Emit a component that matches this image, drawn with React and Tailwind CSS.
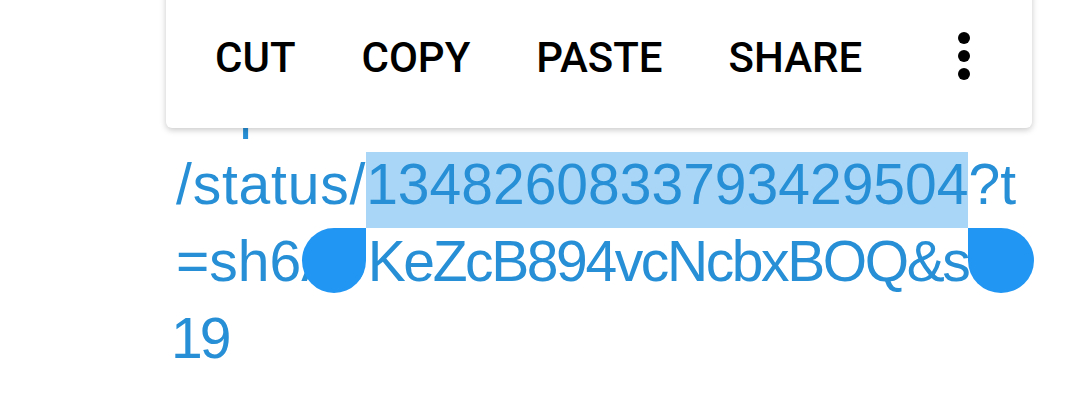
import React from "react";

function Handle({ side }) {
  // teardrop selection handle, pointed corner sits on the selection edge
  if (side === "left") {
    return (
      <span className="absolute top-full right-full w-[64px] h-[65px] bg-[#2196f3] rounded-[50%_0_50%_50%]"></span>
    );
  }
  return (
    <span className="absolute top-full left-full w-[66px] h-[65px] bg-[#2196f3] rounded-[0_50%_50%_50%]"></span>
  );
}

function Toolbar() {
  const items = ["CUT", "COPY", "PASTE", "SHARE"];
  return (
    <div className="absolute left-[166px] top-[-12px] z-10 w-[866px] h-[140px] bg-white rounded-[6px] shadow-[0_2px_6px_rgba(0,0,0,0.22)] flex items-center pl-[49px] pr-[62px] font-['Roboto',sans-serif]">
      <div className="flex items-center gap-[66px] text-[42px] font-medium text-black leading-none">
        {items.map((item) => (
          <span key={item}>{item}</span>
        ))}
      </div>
      <div className="ml-auto mb-[5px] flex flex-col items-center gap-[6px]">
        <span className="block w-[12px] h-[12px] rounded-full bg-black"></span>
        <span className="block w-[12px] h-[12px] rounded-full bg-black"></span>
        <span className="block w-[12px] h-[12px] rounded-full bg-black"></span>
      </div>
    </div>
  );
}

export default function App() {
  return (
    <div className="relative w-[1080px] h-[401px] overflow-hidden bg-white">
      <Toolbar />

      {/* link text */}
      <div className="pt-[75px] pl-[176px] text-[57px] text-[#268fd6] font-['Liberation_Sans',Arial,sans-serif] leading-[64px]">
        <div className="h-[77px] whitespace-nowrap">https://twitter.com/username</div>
        <div className="h-[77px] whitespace-nowrap">
          <span className="tracking-[0.8px]">/status/</span>
          <span className="relative bg-[#a9d6f6] pb-[12px]">
            1348260833793429504
            <Handle side="left" />
            <Handle side="right" />
          </span>
          ?t
        </div>
        <div className="h-[77px] whitespace-nowrap">
          =sh6AJ<span className="tracking-[-2.4px]">KeZcB894vcNcbxBOQ&amp;s</span>=
        </div>
        <div className="h-[77px] whitespace-nowrap -ml-[5px] tracking-[-3px]">19</div>
      </div>
    </div>
  );
}
